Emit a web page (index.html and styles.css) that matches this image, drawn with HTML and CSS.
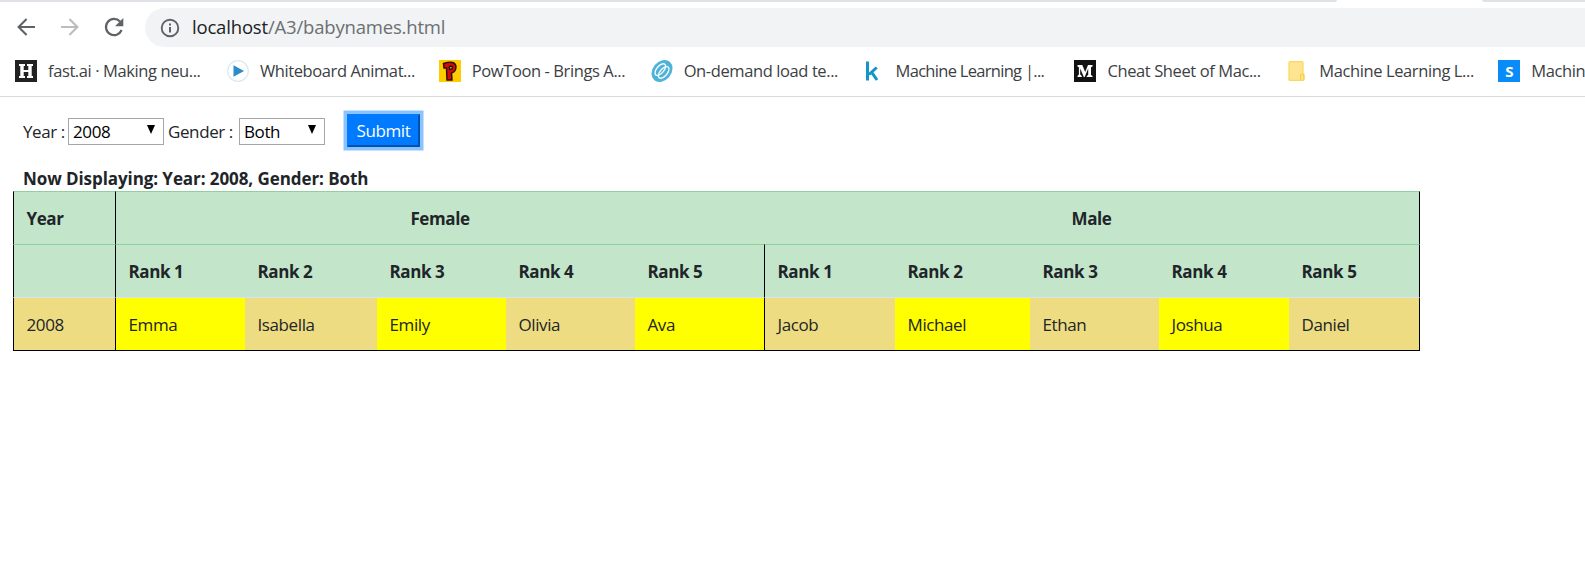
FILE: index.html
```html
<!DOCTYPE html>
<html lang="en">
<head>
<meta charset="utf-8">
<title>Baby Names</title>
<link rel="stylesheet" href="styles.css">
</head>
<body>
<div class="tabstrip"><span class="tab-left"></span><span class="tab-right"></span></div>
<header class="toolbar">
  <nav class="nav">
    <svg class="nav-icon" viewBox="0 0 24 24"><path d="M21 12H5M12.600 4L4.600 12l8 8" fill="none" stroke="#5f6368" stroke-width="2.100"/></svg>
    <svg class="nav-icon" viewBox="0 0 24 24"><path d="M3 12h16M11.400 4l8 8-8 8" fill="none" stroke="#babcbe" stroke-width="2.100"/></svg>
    <svg class="nav-icon" viewBox="0 0 24 24"><path d="M19.600 15A8.100 8.100 0 1 1 18 6.500" fill="none" stroke="#5f6368" stroke-width="2.200"/><path d="M21.300 3v8.300H13z" fill="#5f6368"/></svg>
  </nav>
  <div class="omnibox">
    <svg class="info" viewBox="0 0 20 20"><circle cx="10" cy="10" r="8.300" fill="none" stroke="#5f6368" stroke-width="1.900"/><path d="M9 9h2v5.400H9zM9 5.600h2v2H9z" fill="#5f6368"/></svg>
    <span class="url"><span class="host">localhost</span>/A3/babynames.html</span>
  </div>
</header>
<nav class="bookmarks">
  <a class="bm"><svg viewBox="0 0 22 22"><path fill="#222" d="M0 0h22v22H0z"/><path fill="#fff" d="M4 4h6v2H8.700v4h4.600V6H12V4h6v2h-1.300v10H18v2h-6v-2h1.300v-4H8.700v4H10v2H4v-2h1.300V6H4z"/></svg><span>fast.ai · Making neu...</span></a>
  <a class="bm"><svg viewBox="0 0 22 22"><circle cx="11" cy="11" r="10.300" fill="#fff" stroke="#d8eaf5" stroke-width="1.200"/><path fill="#2a8ccb" d="M6.500 5.300L17 11 6.500 16.700z"/></svg><span>Whiteboard Animat...</span></a>
  <a class="bm"><svg viewBox="0 0 22 22"><path fill="#fc0" d="M0 0h22v22H0z"/><path fill="#d00d0d" fill-rule="evenodd" stroke="#301000" stroke-width="1.500" d="M4.500 3.500Q16 0 17 6.500Q17 12 12.500 13L13 20H8L7.500 8H5zM10.500 6.500v3q3 0 3-2t-3-1z"/></svg><span>PowToon - Brings A...</span></a>
  <a class="bm"><svg viewBox="0 0 22 22"><g transform="rotate(40 11 11)"><ellipse cx="11" cy="11" rx="9.300" ry="12" fill="#4db3d8"/><g fill="none" stroke="#fff" stroke-width="1.300"><ellipse cx="8.800" cy="11" rx="3.600" ry="7"/><ellipse cx="13.200" cy="11" rx="3.600" ry="7"/></g></g></svg><span>On-demand load te...</span></a>
  <a class="bm kaggle"><svg viewBox="0 0 22 22"><path fill="none" stroke="#1295c9" stroke-width="3" d="M4.500 1.500v19M13.700 7.500L6 14.500M8.500 12l5.500 8"/></svg><span>Machine Learning |...</span></a>
  <a class="bm"><svg viewBox="0 0 22 22"><path fill="#121212" d="M0 0h22v22H0z"/><path fill="#fff" d="M3.500 5h4.800L11.200 12 14 5h4.500v1.500L17 7.300v7.800l1.500.8V17h-5.800v-1.100l1.500-.8V8.500L10.700 17h-.9L6.200 8.500v6l1.600 1.400V17H3.500v-1.100l1.400-1.400V7.300L3.500 6.500z"/></svg><span>Cheat Sheet of Mac...</span></a>
  <a class="bm"><svg viewBox="0 0 22 22"><path fill="#ffe591" stroke="#fbd75b" stroke-width="1.200" d="M4 1.600h12q1 0 1 1v11.500h1v5q0 1.300-1.200 1.300H4q-1 0-1-1V2.600q0-1 1-1z"/><path fill="none" stroke="#f5cf52" stroke-width="1.200" d="M14.600 20v-4.500q0-1.200 1.500-1.200t1.700 1.200V20"/></svg><span>Machine Learning L...</span></a>
  <a class="bm"><i class="s-icon">S</i><span>Machine Learning</span></a>
</nav>
<main>
  <form class="filters">
    <label class="l-year">Year :</label>
    <div class="select year"><span>2008</span><svg viewBox="0 0 8 9"><path d="M0 0h8L4 9z"/></svg></div>
    <label class="l-gender">Gender :</label>
    <div class="select gender"><span>Both</span><svg viewBox="0 0 8 9"><path d="M0 0h8L4 9z"/></svg></div>
    <button type="button" class="submit">Submit</button>
  </form>
  <h1 class="heading">Now Displaying: Year: 2008, Gender: Both</h1>
  <table class="names">
    <colgroup><col class="w102"><col class="w130"><col class="w132"><col class="w129"><col class="w129"><col class="w129"><col class="w131"><col class="w135"><col class="w129"><col class="w130"><col class="w131"></colgroup>
    <thead>
      <tr><th>Year</th><th colspan="5" class="group line">Female</th><th colspan="5" class="group">Male</th></tr>
      <tr><th></th><th class="line">Rank 1</th><th>Rank 2</th><th>Rank 3</th><th>Rank 4</th><th>Rank 5</th><th class="line">Rank 1</th><th>Rank 2</th><th>Rank 3</th><th>Rank 4</th><th>Rank 5</th></tr>
    </thead>
    <tbody>
      <tr><td>2008</td><td class="line hi">Emma</td><td>Isabella</td><td class="hi">Emily</td><td>Olivia</td><td class="hi">Ava</td><td class="line">Jacob</td><td class="hi">Michael</td><td>Ethan</td><td class="hi">Joshua</td><td>Daniel</td></tr>
    </tbody>
  </table>
</main>
</body>
</html>
```
FILE: styles.css
```css
* { box-sizing: border-box; }
body {
  margin: 0;
  background: #fff;
  color: #212529;
  font-family: "Open Sans", "Noto Sans", sans-serif;
  font-size: 17px;
  letter-spacing: -0.4px;
  overflow: hidden;
  white-space: nowrap;
}
.tabstrip { display: flex; justify-content: space-between; height: 2px; }
.tab-left { width: 1337px; background: #dee1e6; border-bottom-right-radius: 4px 2px; }
.tab-right { width: 103px; background: #dee1e6; border-bottom-left-radius: 4px 2px; }
.toolbar { display: flex; height: 45px; padding-top: 6px; }
.nav { display: flex; align-items: center; gap: 20px; width: 145px; padding: 0 0 2px 14px; }
.nav-icon { width: 24px; height: 24px; flex: none; }
.omnibox {
  display: flex; align-items: center; flex: 1; height: 39px; padding-left: 15px; gap: 12px;
  background: #f1f3f4; border-radius: 20px 0 0 20px;
}
.info { width: 20px; height: 20px; }
.url { color: #6b6f73; font-size: 18.5px; letter-spacing: -0.18px; line-height: 37px; height: 39px; }
.host { color: #202124; }
.bookmarks { display: flex; height: 50px; padding: 0 0 1px 15px; border-bottom: 1px solid #d9dadd; overflow: hidden; }
.bm { display: flex; flex: none; width: 211.9px; height: 48px; align-items: center; gap: 11px; color: #3c4043; font-size: 16.5px; }
.bm span { padding-bottom: 2px; }
.kaggle { letter-spacing: -0.7px; }
.bm svg, .s-icon { width: 22px; height: 22px; flex: none; }
.s-icon { background: #0a8cf8; color: #fff; font: bold 15px/22px "Open Sans", sans-serif; text-align: center; }
main { padding-left: 13px; }
.filters { display: flex; align-items: center; height: 68px; padding-left: 10px; }
.l-year { width: 45px; }
.l-gender { width: 71px; }
.select { display: flex; justify-content: space-between; align-items: center; height: 27px; border: 1px solid #a6a6a6; color: #000; padding: 0 8px 0 4px; }
.select svg { width: 8px; height: 9px; margin-bottom: 3px; }
.year { width: 96px; margin-right: 4px; }
.gender { width: 86px; margin-right: 22px; }
.submit {
  width: 73px; height: 33px; padding: 0 0 1px; border: 2px outset #007bff; background: #007bff; color: #fff;
  font: inherit; letter-spacing: inherit; box-shadow: 0 0 0 3.5px rgba(0,123,255,.45); margin-bottom: 1px;
}
.heading { margin: 0; padding-left: 10px; height: 26px; line-height: 27px; font-size: 17px; font-weight: 700; letter-spacing: -0.08px; }
.names { width: 1407px; table-layout: fixed; border-collapse: separate; border-spacing: 0; }
.names th, .names td { height: 53px; padding: 0 0 0 12.5px; text-align: left; border-top: 1px solid #8fd19e; background: #c3e6cb; }
.names td { height: 54px; border-top-color: #dee2e6; border-bottom: 1px solid #000; background: #eedc82; }
.names .line, .names tr > :first-child { border-left: 1px solid #000; }
.names tr > :last-child { border-right: 1px solid #000; }
.names .hi { background: #ff0; }
.names .group { text-align: center; padding: 0; }
.w102 { width: 102px; } .w129 { width: 129px; } .w130 { width: 130px; }
.w131 { width: 131px; } .w132 { width: 132px; } .w135 { width: 135px; }
```
